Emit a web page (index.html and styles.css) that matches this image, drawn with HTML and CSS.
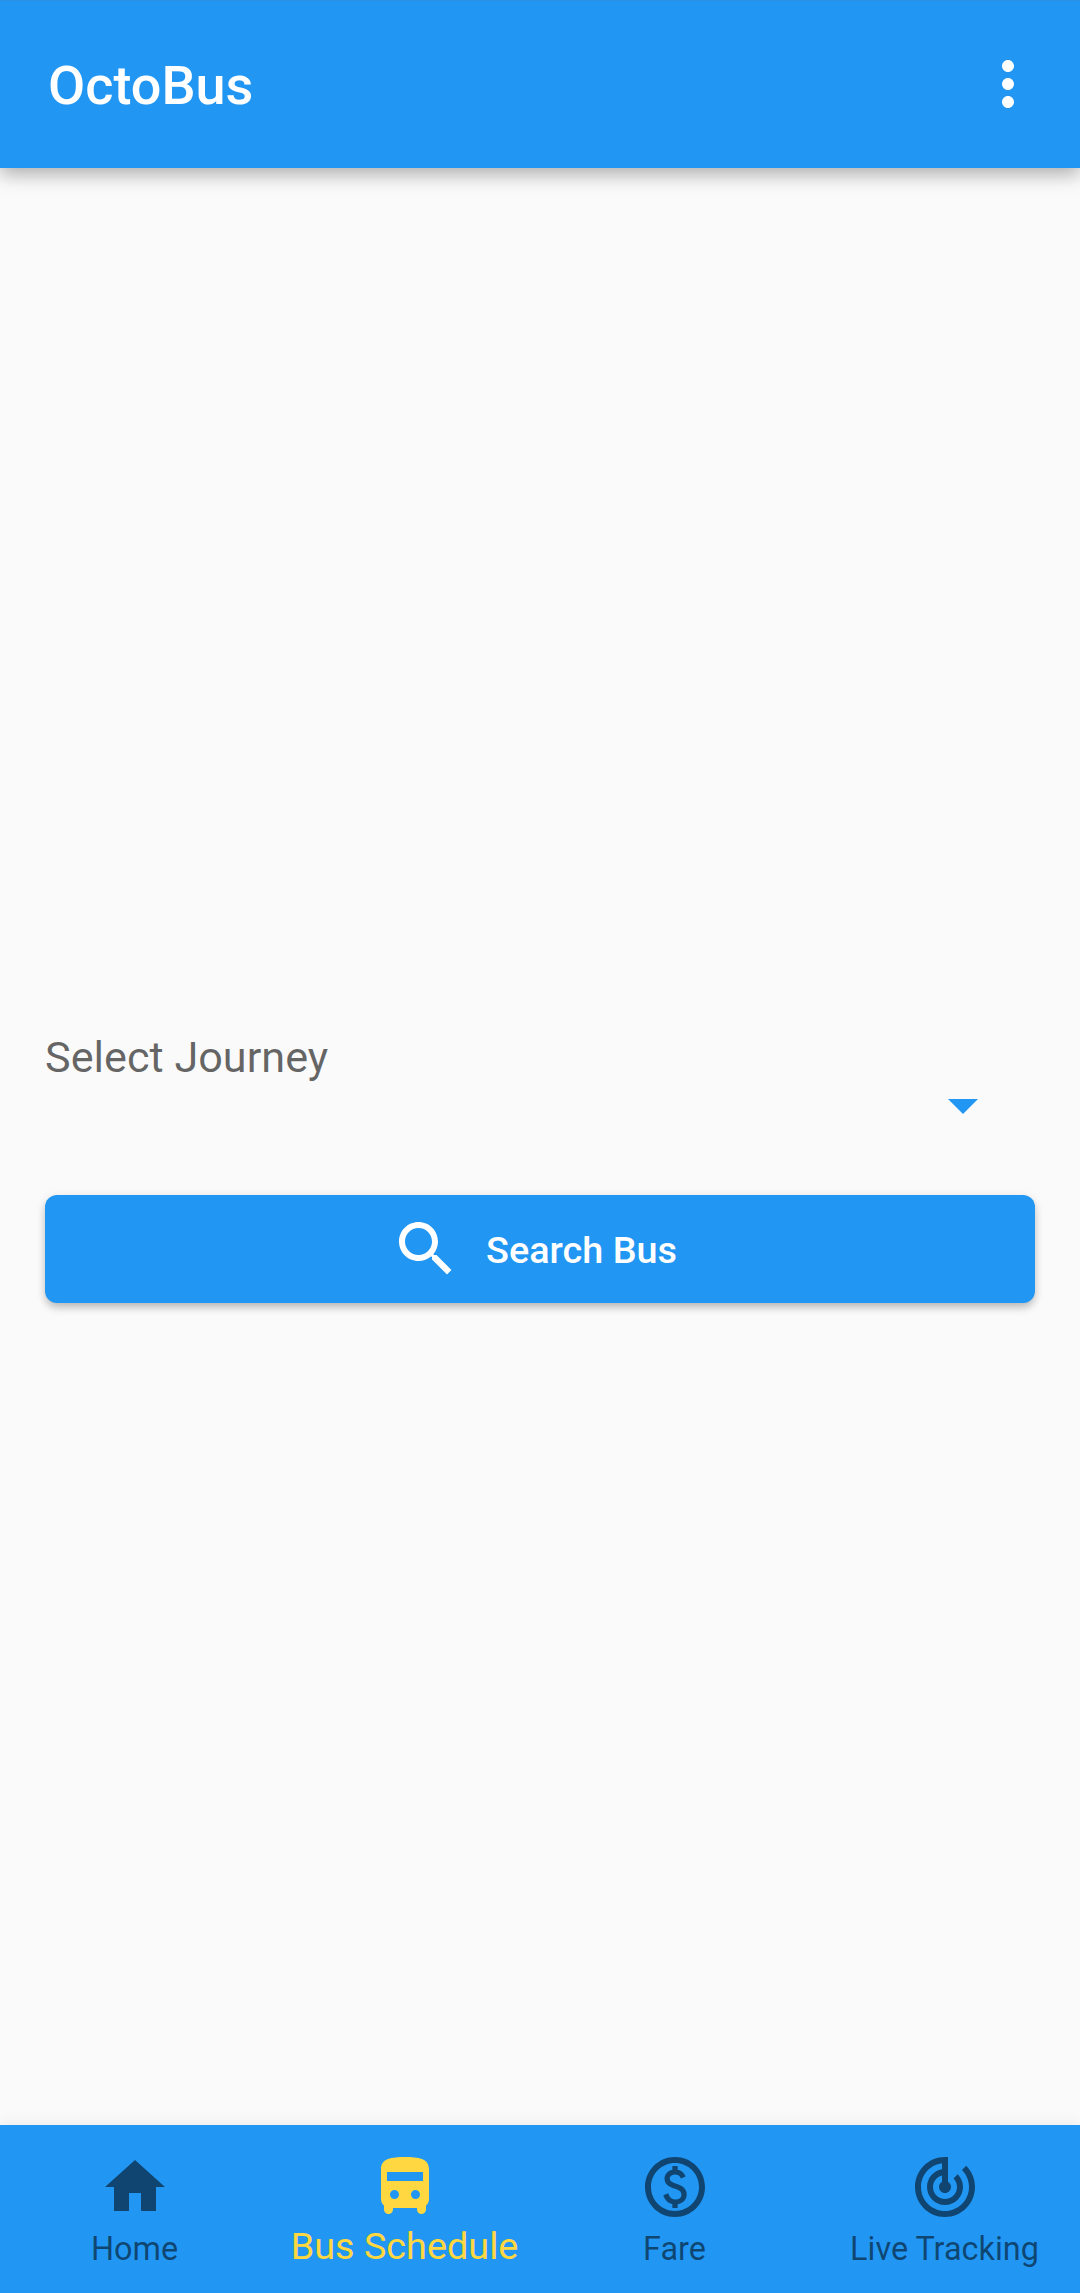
FILE: index.html
```html
<!DOCTYPE html>
<html lang="en">
<head>
<meta charset="utf-8">
<title>OctoBus</title>
<link rel="stylesheet" href="styles.css">
</head>
<body>
<div class="app">
  <header class="app-bar">
    <h1 class="title">OctoBus</h1>
    <button class="menu-button" aria-label="More options">
      <svg class="icon" viewBox="0 0 24 24"><path d="M12 8c1.1 0 2-.9 2-2s-.9-2-2-2-2 .9-2 2 .9 2 2 2zm0 2c-1.1 0-2 .9-2 2s.9 2 2 2 2-.9 2-2-.9-2-2-2zm0 6c-1.1 0-2 .9-2 2s.9 2 2 2 2-.9 2-2-.9-2-2-2z"/></svg>
    </button>
  </header>

  <main class="content">
    <div class="field">
      <div class="field-label">Select Journey</div>
      <div class="select">
        <svg class="icon" viewBox="0 0 24 24"><path d="M7 10l5 5 5-5z"/></svg>
      </div>
    </div>
    <button class="search-button">
      <svg class="icon" viewBox="0 0 24 24"><path d="M15.5 14h-.79l-.28-.27C15.41 12.59 16 11.11 16 9.5 16 5.91 13.09 3 9.5 3S3 5.91 3 9.5 5.91 16 9.5 16c1.61 0 3.09-.59 4.23-1.57l.27.28v.79l5 4.99L20.49 19l-4.99-5zm-6 0C7.01 14 5 11.99 5 9.5S7.01 5 9.5 5 14 7.01 14 9.5 11.99 14 9.5 14z"/></svg>
      <span class="search-text">Search Bus</span>
    </button>
  </main>

  <nav class="bottom-nav">
    <a class="tab">
      <svg class="icon" viewBox="0 0 24 24"><path d="M10 20v-6h4v6h5v-8h3L12 3 2 12h3v8z"/></svg>
      <span class="tab-label">Home</span>
    </a>
    <a class="tab tab-active">
      <svg class="icon" viewBox="0 0 24 24"><path fill-rule="evenodd" d="M12 2c-4.42 0-8 .5-8 4v10c0 .88.39 1.67 1 2.22v1.28c0 .83.67 1.5 1.5 1.5S8 20.33 8 19.5V19h8v.5c0 .82.67 1.5 1.5 1.5.82 0 1.5-.67 1.5-1.5v-1.28c.61-.55 1-1.34 1-2.22V6c0-3.5-3.58-4-8-4zM8.5 16c-.83 0-1.5-.67-1.5-1.5S7.67 13 8.5 13s1.5.67 1.5 1.5S9.33 16 8.5 16zm7 0c-.83 0-1.5-.67-1.5-1.5s.67-1.5 1.5-1.5 1.5.67 1.5 1.5-.67 1.5-1.5 1.5zM18 10H6V7h12v3z"/></svg>
      <span class="tab-label">Bus Schedule</span>
    </a>
    <a class="tab">
      <svg class="icon" viewBox="0 0 24 24"><path d="M12 2C6.48 2 2 6.48 2 12s4.48 10 10 10 10-4.48 10-10S17.52 2 12 2zm0 18c-4.41 0-8-3.59-8-8s3.59-8 8-8 8 3.59 8 8-3.59 8-8 8zm.89-8.9c-1.78-.59-2.64-.96-2.64-1.9 0-1.02 1.11-1.39 1.81-1.39 1.31 0 1.79.99 1.9 1.34l1.58-.67c-.15-.44-.82-1.91-2.66-2.23V5h-1.75v1.26c-2.6.56-2.62 2.85-2.62 2.96 0 2.27 2.25 2.91 3.35 3.31 1.58.56 2.28 1.07 2.28 2.03 0 1.13-1.05 1.61-1.98 1.61-1.82 0-2.34-1.87-2.4-2.09l-1.66.67c.63 2.19 2.28 2.78 3.02 2.96V19h1.75v-1.24c.52-.09 3.02-.59 3.02-3.22.01-1.39-.6-2.61-3-3.44z"/></svg>
      <span class="tab-label">Fare</span>
    </a>
    <a class="tab">
      <svg class="icon" viewBox="0 0 24 24"><path d="M19.07 4.93l-1.41 1.41C19.1 7.79 20 9.79 20 12c0 4.42-3.58 8-8 8s-8-3.58-8-8c0-4.08 3.05-7.44 7-7.93v2.02C8.16 6.57 6 9.03 6 12c0 3.31 2.69 6 6 6s6-2.69 6-6c0-1.66-.67-3.16-1.76-4.24l-1.41 1.41C15.55 9.9 16 10.9 16 12c0 2.21-1.79 4-4 4s-4-1.79-4-4c0-1.86 1.28-3.41 3-3.86v2.14c-.6.35-1 .98-1 1.72 0 1.1.9 2 2 2s2-.9 2-2c0-.74-.4-1.38-1-1.72V2h-1C6.48 2 2 6.48 2 12s4.48 10 10 10 10-4.48 10-10c0-2.76-1.12-5.26-2.93-7.07z"/></svg>
      <span class="tab-label">Live Tracking</span>
    </a>
  </nav>
</div>
</body>
</html>
```
FILE: styles.css
```css
* {
  box-sizing: border-box;
}

body {
  margin: 0;
  background: #fafafa;
  font-family: Roboto, sans-serif;
}

button {
  border: 0;
  background: none;
  color: inherit;
  font-family: inherit;
}

.app {
  display: flex;
  flex-direction: column;
  height: 2293px;
}

.icon {
  display: block;
  flex: none;
  width: 72px;
  height: 72px;
  fill: currentColor;
}

.app-bar {
  display: flex;
  flex: none;
  align-items: center;
  justify-content: space-between;
  height: 168px;
  padding: 0 36px 0 48px;
  background: #2196f3;
  border-top: 1px solid #2c91e2;
  color: #fff;
  box-shadow:
    0 6px 18px rgba(0, 0, 0, 0.3),
    0 0 30px rgba(0, 0, 0, 0.03);
}

.title {
  margin: 0;
  padding-top: 3px;
  font-size: 54px;
  font-weight: 500;
  line-height: 64px;
}

.menu-button {
  padding: 0;
  margin-top: -1px;
}

.content {
  flex: 1;
  padding: 865px 45px 0;
}

.field-label {
  color: rgba(0, 0, 0, 0.6);
  font-size: 43.2px;
  line-height: 50px;
}

.select {
  display: flex;
  justify-content: flex-end;
  margin-top: -14px;
  padding-right: 36px;
  color: #2196f3;
}

.search-button {
  display: flex;
  align-items: center;
  justify-content: center;
  gap: 24px;
  width: 100%;
  height: 108px;
  margin-top: 54px;
  padding: 0 49px 0 36px;
  border-radius: 12px;
  background: #2196f3;
  color: #fff;
  box-shadow:
    0 5px 9px -1px rgba(0, 0, 0, 0.25),
    0 1px 12px rgba(0, 0, 0, 0.06);
}

.search-text {
  padding-top: 1px;
  font-size: 37.8px;
  font-weight: 500;
  line-height: 44px;
}

.bottom-nav {
  display: grid;
  flex: none;
  grid-template-columns: repeat(4, 1fr);
  height: 168px;
  background: #2196f3;
  box-shadow: 0 0 15px rgba(0, 0, 0, 0.08);
}

.tab {
  display: flex;
  flex-direction: column;
  align-items: center;
  padding-top: 26px;
  color: rgba(0, 0, 0, 0.54);
}

.tab-label {
  margin-top: 6px;
  padding-right: 1px;
  font-size: 32.4px;
  line-height: 40px;
  white-space: nowrap;
}

.tab-active {
  color: #ffd740;
}

.tab-active .tab-label {
  margin-top: 3px;
  font-size: 37.8px;
}
```
